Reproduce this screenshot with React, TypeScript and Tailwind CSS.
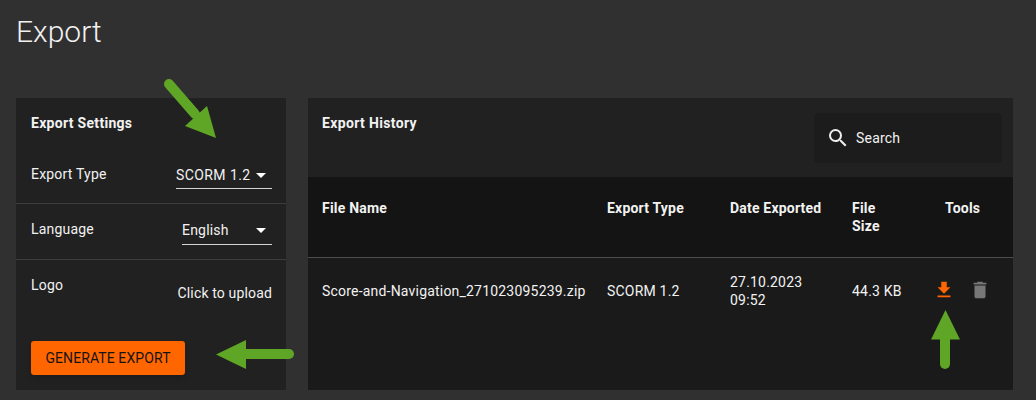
import React from 'react';
import { MdDelete, MdFileDownload, MdSearch } from 'react-icons/md';

const font = { fontFamily: 'Roboto, sans-serif' };

function Caret() {
  return <span className="absolute right-[6px] top-[8px] h-0 w-0 border-x-[5px] border-t-[5px] border-x-transparent border-t-white" />;
}

// green annotation arrows that sit over the page
function Arrows() {
  return (
    <svg className="absolute left-0 top-0 pointer-events-none" width="1036" height="400" fill="#5fa526">
      <path d="M169 84 L195 114" stroke="#5fa526" strokeWidth="10" strokeLinecap="round" />
      <path d="M185 126 L207 106 L216 138 Z" />
      <path d="M289 354 L240 354" stroke="#5fa526" strokeWidth="10" strokeLinecap="round" />
      <path d="M216 354.500 L246 340 L246 369 Z" />
      <path d="M945 364 L945 335" stroke="#5fa526" strokeWidth="10" strokeLinecap="round" />
      <path d="M945.500 310 L960 339.500 L931 339.500 Z" />
    </svg>
  );
}

export default function App() {
  return (
    <div className="relative h-[400px] w-[1036px] overflow-hidden bg-[#303030] px-[16px] text-[#f2f2f2]" style={font}>
      <h1 className="pt-[14px] text-[30px] font-light leading-[36px]">Export</h1>

      <div className="mt-[48px] flex h-[292px] items-stretch gap-[22px] tracking-[0.2px]">
        {/* Export settings */}
        <section className="flex w-[270px] flex-col bg-[#212121] text-[14px]">
          <h2 className="px-[15px] pt-[15px] text-[14px] font-bold leading-[20px] tracking-[0.3px]">Export Settings</h2>
          <div className="mt-[17px] flex h-[54px] justify-between border-b border-[#3d3d3d] px-[14px] pl-[15px]">
            <span className="pt-[14px] leading-[20px]">Export Type</span>
            <div className="relative mt-[15px] h-[24px] w-[96px] self-start border-b border-[#d4d4d4] leading-[20px] tracking-[0.42px]">
              SCORM 1.2
              <Caret />
            </div>
          </div>
          <div className="flex h-[56px] justify-between border-b border-[#3d3d3d] px-[14px] pl-[15px]">
            <span className="pt-[15px] leading-[20px]">Language</span>
            <div className="relative mt-[16px] h-[25px] w-[90px] self-start border-b border-[#d4d4d4] leading-[20px]">
              English
              <Caret />
            </div>
          </div>
          <div className="flex justify-between px-[14px] pl-[15px]">
            <span className="pt-[15px] leading-[20px]">Logo</span>
            <span className="pt-[23px] leading-[20px] tracking-[0.15px]">Click to upload</span>
          </div>
          <button className="ml-[15px] mt-[38px] h-[34px] w-[154px] rounded-[3px] bg-[#ff6600] text-[14px] leading-[32px] tracking-[0.1px] text-[#141414] shadow-md">
            GENERATE EXPORT
          </button>
        </section>

        {/* Export history */}
        <section className="flex w-[705px] flex-col bg-[#212121] text-[14px]">
          <div className="flex h-[79px] justify-between pl-[14px] pr-[11px]">
            <h2 className="pt-[15px] font-bold leading-[20px] tracking-[0.35px]">Export History</h2>
            <div className="mt-[15px] flex h-[50px] w-[188px] items-center rounded-[4px] bg-[#1c1c1c] pl-[12px]">
              <MdSearch size={24} className="text-[#eeeeee]" />
              <span className="ml-[6px] leading-[20px]">Search</span>
            </div>
          </div>
          <div className="grid h-[81px] grid-cols-[285px_123px_122px_92px_1fr] border-b border-[#4d4d4d] bg-[#141414] pl-[14px] pt-[22px] font-bold leading-[18px]">
            <span>File Name</span>
            <span>Export Type</span>
            <span>Date Exported</span>
            <span className="w-[40px]">File Size</span>
            <span className="pl-[1px]">Tools</span>
          </div>
          <div className="grid flex-1 grid-cols-[285px_123px_122px_92px_1fr] bg-[#1a1a1a] pl-[14px] pt-[15px] leading-[18px]">
            <span className="pt-[9px]">Score-and-Navigation_271023095239.zip</span>
            <span className="pt-[9px]">SCORM 1.2</span>
            <span>
              27.10.2023
              <br />
              09:52
            </span>
            <span className="pt-[9px]">44.3 KB</span>
            <div className="-ml-[11px] flex gap-[14px] pt-[6px]">
              <MdFileDownload size={22} className="text-[#ff6600]" />
              <MdDelete size={22} className="text-[#777777]" />
            </div>
          </div>
        </section>
      </div>

      <Arrows />
    </div>
  );
}
